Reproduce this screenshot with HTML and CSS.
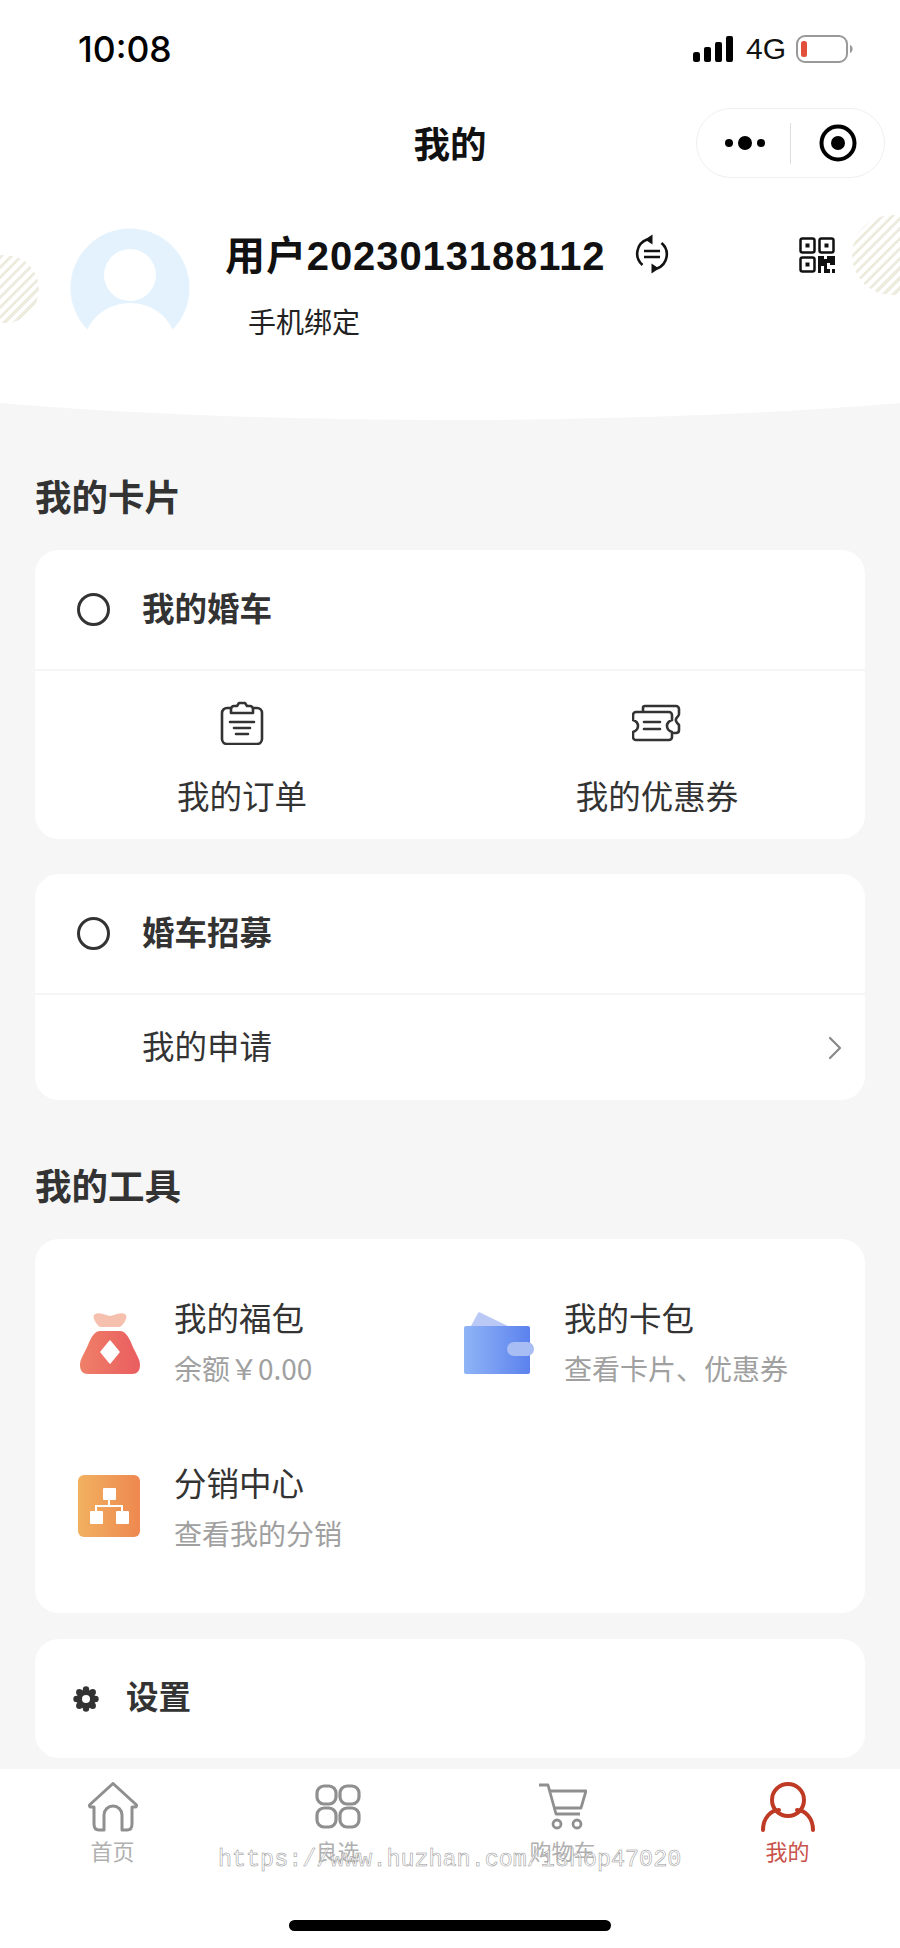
FILE: index.html
```html
<!DOCTYPE html>
<html lang="zh-CN">
<head>
<meta charset="utf-8">
<title>我的</title>
<link rel="stylesheet" href="styles.css">
</head>
<body>
<div class="phone">
  <header class="header">
    <span class="stripe stripe-left"></span>
    <span class="stripe stripe-right"></span>
    <div class="status">
      <span class="time">10:08</span>
      <div class="status-right">
        <svg class="signal" width="40" height="26" viewBox="0 0 40 26"><rect x="0" y="16" width="7" height="10" rx="2.5"/><rect x="11" y="11" width="7" height="15" rx="2"/><rect x="22" y="6" width="7" height="20" rx="2"/><rect x="33" y="0" width="7" height="26" rx="2"/></svg>
        <span class="net">4G</span>
        <svg class="battery" width="57" height="28" viewBox="0 0 57 28"><rect x="1" y="1" width="50" height="26" rx="8" fill="#fff" stroke="#999" stroke-width="2"/><rect x="5" y="6" width="6" height="16" rx="2.5" fill="#e2503c"/><path d="M54 10c2 1 2.600 2.500 2.600 4s-.6 3-2.600 4z" fill="#999"/></svg>
      </div>
    </div>
    <nav class="nav">
      <h1 class="nav-title">我的</h1>
      <div class="capsule">
        <svg width="48" height="16" viewBox="0 0 48 16"><circle cx="8" cy="8" r="4"/><circle cx="24" cy="8" r="7"/><circle cx="40" cy="8" r="4"/></svg>
        <span class="capsule-line"></span>
        <svg width="38" height="38" viewBox="0 0 38 38"><circle cx="19" cy="19" r="16.500" fill="none" stroke="#000" stroke-width="4"/><circle cx="19" cy="19" r="7"/></svg>
      </div>
    </nav>
    <div class="profile">
      <svg class="avatar" width="120" height="120" viewBox="0 0 120 120">
        <circle cx="60" cy="60" r="59.500" fill="#e3f2fd"/>
        <rect x="0" y="102" width="120" height="18" fill="#fff"/>
        <ellipse cx="60" cy="118" rx="46" ry="43" fill="#fff"/>
        <circle cx="60" cy="47" r="26" fill="#fff"/>
      </svg>
      <div class="profile-text">
        <div class="name-row">
          <span class="name">用户2023013188112</span>
          <svg class="swap" width="38" height="40" viewBox="0 0 38 40" fill="none" stroke="#111" stroke-width="2.600"><path d="M14 5.500A15 15 0 0 0 9.500 31"/><path d="M24 34.500A15 15 0 0 0 28.500 9"/><path d="M19.500 .5v10L12 5.500z" fill="#111" stroke="none"/><path d="M18.500 39.500v-10l7.500 5z" fill="#111" stroke="none"/><path d="M11 17h16M11 23h16"/></svg>
          <svg class="qr" width="36" height="36" viewBox="0 0 36 36" fill="none" stroke="#111" stroke-width="2.500"><rect x="1.500" y="1.500" width="14" height="14" rx="2"/><rect x="20.500" y="1.500" width="14" height="14" rx="2"/><rect x="1.500" y="20.500" width="14" height="14" rx="2"/><g fill="#111" stroke="none"><rect x="6.500" y="6.500" width="4" height="4"/><rect x="25.500" y="6.500" width="4" height="4"/><rect x="6.500" y="25.500" width="4" height="4"/><path d="M19 19h6v3h3v-3h8v9h-5v-2h-3v10h-3v-7h-3v7h-3z"/><rect x="28" y="32" width="3" height="4"/><rect x="33" y="32" width="3" height="4"/></g></svg>
        </div>
        <div class="bind">手机绑定</div>
      </div>
    </div>
  </header>

  <main class="content">
    <h2 class="section-title">我的卡片</h2>
    <section class="card">
      <div class="card-head"><span class="ring"></span><span class="card-title">我的婚车</span></div>
      <div class="shortcuts">
        <div class="shortcut">
          <svg width="44" height="44" viewBox="0 0 44 44" fill="none" stroke="#333" stroke-width="2.600" stroke-linecap="round" stroke-linejoin="round"><path d="M11 7H7a5 5 0 0 0-5 5v26a5 5 0 0 0 5 5h30a5 5 0 0 0 5-5V12a5 5 0 0 0-5-5h-4"/><path d="M11 12V8a3 3 0 0 1 3-3h3l2-3h6l2 3h3a3 3 0 0 1 3 3v4z"/><path d="M10 21h24M14 27h16M16 33h12"/></svg>
          <span class="shortcut-label">我的订单</span>
        </div>
        <div class="shortcut">
          <svg width="50" height="36" viewBox="0 0 50 36" fill="none" stroke="#333" stroke-width="2.600" stroke-linecap="round" stroke-linejoin="round"><path d="M11 6V3a2 2 0 0 1 2-2h31a3 3 0 0 1 3 3v5c0 2-2 3-3 5s1 4 3 6v5c0 2-1 3-3 3h-2"/><path d="M4 7h33a3 3 0 0 1 3 3v5c-3 1-5 3-5 6s2 5 5 6v5a3 3 0 0 1-3 3H4a3 3 0 0 1-3-3v-5c3-1 5-3 5-6s-2-5-5-6v-5a3 3 0 0 1 3-3z"/><path d="M12 17h16M12 24h16"/></svg>
          <span class="shortcut-label">我的优惠券</span>
        </div>
      </div>
    </section>

    <section class="card card-recruit">
      <div class="card-head"><span class="ring"></span><span class="card-title">婚车招募</span></div>
      <div class="row">
        <span class="row-label">我的申请</span>
        <svg class="chevron" width="14" height="24" viewBox="0 0 14 24" fill="none" stroke="#888" stroke-width="2.200" stroke-linecap="round" stroke-linejoin="round"><path d="M2 2l10 10L2 22"/></svg>
      </div>
    </section>

    <h2 class="section-title section-tools">我的工具</h2>
    <section class="card tools">
      <div class="tool">
        <div class="tool-icon">
          <svg width="60" height="62" viewBox="0 0 60 62"><defs><linearGradient id="bag"><stop offset="0" stop-color="#ef8068"/><stop offset="1" stop-color="#ea5d60"/></linearGradient></defs><path d="M14 3c4-4 10 0 16 1 6-1 12-5 16-1 2 3-3 10-6 12H20c-3-2-8-9-6-12z" fill="#f6c0ae"/><path d="M20 19h20c5 0 9 6 12 14 4 9 8 14 8 20 0 6-3 9-8 9H8c-5 0-8-3-8-9 0-6 4-11 8-20 3-8 7-14 12-14z" fill="url(#bag)"/><path d="M30 29l9 11-9 11-9-11z" fill="#fff" stroke="#fff" stroke-width="1.500" stroke-linejoin="round"/></svg>
        </div>
        <div><div class="tool-title">我的福包</div><div class="tool-sub">余额￥0.00</div></div>
      </div>
      <div class="tool">
        <div class="tool-icon">
          <svg class="wallet" width="70" height="62" viewBox="0 0 70 62"><defs><linearGradient id="wal"><stop offset="0" stop-color="#8fb4f6"/><stop offset="1" stop-color="#5c82ee"/></linearGradient></defs><path d="M7 14L14 1c1-1 2-1 3 0l29 14z" fill="#b9c8f5"/><rect x="0" y="14" width="66" height="48" rx="2" fill="url(#wal)"/><rect x="43" y="30" width="27" height="14" rx="7" fill="#a9bdf5"/></svg>
        </div>
        <div><div class="tool-title">我的卡包</div><div class="tool-sub">查看卡片、优惠券</div></div>
      </div>
      <div class="tool">
        <div class="tool-icon tool-icon-org">
          <svg width="62" height="62" viewBox="0 0 62 62"><defs><linearGradient id="org"><stop offset="0" stop-color="#f1b160"/><stop offset="1" stop-color="#ee8850"/></linearGradient></defs><rect width="62" height="62" rx="6" fill="url(#org)"/><g fill="#fff"><rect x="25" y="13" width="13" height="12" rx="1"/><rect x="12" y="36" width="13" height="13" rx="1"/><rect x="38" y="36" width="13" height="13" rx="1"/></g><path d="M31 25v6M18 36v-5h26v5" fill="none" stroke="#fff" stroke-width="2"/></svg>
        </div>
        <div><div class="tool-title">分销中心</div><div class="tool-sub">查看我的分销</div></div>
      </div>
    </section>

    <section class="card settings">
      <svg width="26" height="26" viewBox="0 0 26 26" fill="#333"><g><circle cx="13" cy="13" r="9.500"/><circle cx="13" cy="3.500" r="3.200"/><circle cx="13" cy="22.500" r="3.200"/><circle cx="3.500" cy="13" r="3.200"/><circle cx="22.500" cy="13" r="3.200"/><circle cx="6.300" cy="6.300" r="3.200"/><circle cx="19.700" cy="6.300" r="3.200"/><circle cx="6.300" cy="19.700" r="3.200"/><circle cx="19.700" cy="19.700" r="3.200"/></g><circle cx="13" cy="13" r="4" fill="#fff"/></svg>
      <span class="settings-label">设置</span>
    </section>
  </main>

  <footer class="tabbar">
    <div class="tabs">
      <div class="tab">
        <svg width="50" height="50" viewBox="0 0 50 50" fill="none" stroke="#8f8f8f" stroke-width="3" stroke-linejoin="round" stroke-linecap="round"><path d="M6 25L3 25C1.500 25 1 23.500 2 22.500L25 1.500 48 22.500C49 23.500 48.500 25 47 25H44V42C44 46 42 48 39 48H34V33A9 9 0 0 0 16 33V48H11C8 48 6 46 6 42z"/></svg>
        <span class="tab-label">首页</span>
      </div>
      <div class="tab">
        <svg width="46" height="48" viewBox="0 0 46 48" fill="none" stroke="#8f8f8f" stroke-width="3.200"><rect x="2" y="3" width="19" height="18" rx="7"/><rect x="25" y="3" width="19" height="18" rx="7"/><rect x="2" y="25" width="19" height="19" rx="7"/><rect x="25" y="25" width="19" height="19" rx="7"/></svg>
        <span class="tab-label">良选</span>
      </div>
      <div class="tab">
        <svg width="48" height="48" viewBox="0 0 48 48" fill="none" stroke="#8f8f8f" stroke-width="2.800" stroke-linejoin="round"><path d="M0 2h9l8 29h24"/><path d="M10 8h37l-5 17H15"/><circle cx="18" cy="41" r="4"/><circle cx="38" cy="41" r="4"/></svg>
        <span class="tab-label">购物车</span>
      </div>
      <div class="tab tab-active">
        <svg width="54" height="50" viewBox="0 0 54 50" fill="none" stroke="#bf3a24" stroke-width="4" stroke-linecap="round"><ellipse cx="27" cy="18" rx="16" ry="16"/><path d="M2 48c0-12 8-20 16-20M52 48c0-12-8-20-16-20"/></svg>
        <span class="tab-label">我的</span>
      </div>
    </div>
    <div class="watermark">https://www.huzhan.com/1shop47020</div>
    <div class="home-bar"></div>
  </footer>
</div>
</body>
</html>
```
FILE: styles.css
```css
* { box-sizing: border-box; }
html, body { margin: 0; padding: 0; }
body {
  background: #f6f6f6;
  font-family: "Noto Sans CJK SC", "Liberation Sans", sans-serif;
  color: #333;
}
.phone {
  position: relative;
  width: 900px;
  height: 1948px;
  overflow: hidden;
  display: flex;
  flex-direction: column;
}

/* header */
.header {
  position: relative;
  isolation: isolate;
  height: 420px;
  flex: none;
  overflow: hidden;
  background: linear-gradient(#fff 0 403px, transparent 403px);
}
.header::before {
  content: "";
  position: absolute;
  z-index: -1;
  left: -350px;
  bottom: 0;
  width: 1600px;
  height: 196px;
  border-radius: 50%;
  background: #fff;
}
.stripe {
  position: absolute;
  border-radius: 50%;
  background: repeating-linear-gradient(135deg, #eeebdf 0 3px, #fff 3px 7px);
}
.stripe-left { left: -29px; top: 255px; width: 68px; height: 68px; }
.stripe-right { left: 852px; top: 215px; width: 80px; height: 80px; }

.status {
  height: 98px;
  display: flex;
  justify-content: space-between;
  align-items: center;
  padding: 0 47px 0 78px;
  color: #000;
}
.time {
  font-family: "Inter", "Liberation Sans", sans-serif;
  font-weight: 500;
  font-size: 35.500px;
  letter-spacing: 0;
}
.status-right { display: flex; align-items: center; }
.signal { fill: #000; }
.net {
  font-family: "Liberation Sans", sans-serif;
  font-size: 30px;
  margin: 0 10px 0 13px;
  color: #111;
}
.nav {
  height: 90px;
  display: grid;
  grid-template-columns: 1fr auto 1fr;
  align-items: center;
}
.nav-title {
  grid-column: 2;
  margin: 0;
  font-size: 36.500px;
  font-weight: 700;
  color: #111;
  line-height: 1.2;
}
.capsule {
  grid-column: 3;
  justify-self: end;
  margin-right: 15px;
  width: 189px;
  height: 70px;
  border: 1px solid #efefef;
  border-radius: 35px;
  background: #fff;
  display: flex;
  align-items: center;
  padding-left: 24px;
}
.capsule-line { width: 1px; height: 41px; background: #ddd; margin: 0 28px 0 21px; }

.profile {
  position: relative;
  display: flex;
  padding: 40px 0 0 70px;
}
.avatar { flex: none; }
.profile-text { margin-left: 35px; flex: 1; }
.name-row {
  position: relative;
  display: flex;
  align-items: center;
  height: 54px;
}
.name {
  font-family: "Liberation Sans", "Noto Sans CJK SC", sans-serif;
  font-weight: 700;
  font-size: 40px;
  color: #111;
  letter-spacing: .9px;
  white-space: nowrap;
  margin-bottom: 5px;
}
.swap { margin: 0 0 2px 27px; flex: none; }
.qr { margin-left: 128px; flex: none; }
.bind {
  margin: 19px 0 0 23px;
  font-size: 28px;
  line-height: 40px;
  color: #222;
}

/* content */
.content { flex: 1; padding: 0 35px; min-height: 0; }
.section-title {
  margin: 0;
  padding-top: 54px;
  height: 130px;
  font-size: 36.500px;
  line-height: 44px;
  font-weight: 700;
  color: #333;
}
.section-tools { height: 139px; padding-top: 63px; }
.card {
  background: #fff;
  border-radius: 24px;
  width: 830px;
}
.card-head {
  height: 121px;
  padding-left: 42px;
  display: flex;
  align-items: center;
  border-bottom: 2px solid #f5f5f5;
}
.ring {
  width: 33px;
  height: 33px;
  border: 3px solid #333;
  border-radius: 50%;
  margin: 0 32px 0 0;
  flex: none;
}
.card-title {
  font-size: 32.500px;
  font-weight: 700;
  color: #333;
  margin-bottom: 6px;
}
.shortcuts {
  height: 168px;
  display: grid;
  grid-template-columns: 414px 1fr;
}
.shortcut {
  display: flex;
  flex-direction: column;
  align-items: center;
}
.shortcut svg { height: 44px; margin-top: 30px; }
.shortcut-label { font-size: 32.500px; line-height: 44px; margin-top: 28px; color: #333; }
.card-recruit { margin-top: 35px; height: 226px; }
.row {
  height: 103px;
  padding: 0 23px 0 107px;
  display: flex;
  align-items: center;
  justify-content: space-between;
  font-size: 32.500px;
  color: #333;
}
.row-label { margin-bottom: 5px; }
.chevron { margin-top: 2px; }
.tools {
  height: 374px;
  padding: 60px 0 0 45px;
  display: grid;
  grid-template-columns: 390px 1fr;
  grid-auto-rows: 90px;
  row-gap: 75px;
}
.tool { display: flex; }
.tool-icon { width: 94px; flex: none; padding-top: 13px; }
.tool-icon-org { padding-top: 11px; }
.tool-icon-org svg { margin-left: -2px; }
.wallet { margin-left: -6px; }
.tool-title { font-size: 32.500px; line-height: 40px; margin-top: -2px; color: #333; }
.tool-sub { font-size: 28px; line-height: 40px; margin-top: 11px; color: #a0a0a0; white-space: nowrap; }
.settings {
  margin-top: 26px;
  height: 119px;
  padding-left: 38px;
  display: flex;
  align-items: center;
}
.settings-label { font-size: 32.500px; font-weight: 700; margin: 0 0 8px 27px; color: #333; }

/* tab bar */
.tabbar {
  position: relative;
  height: 179px;
  flex: none;
  background: #fff;
}
.tabs { display: grid; grid-template-columns: repeat(4, 225px); padding-top: 13px; }
.tab { display: flex; flex-direction: column; align-items: center; height: 90px; }
.tab svg { height: 50px; flex: none; }
.tab-label { font-size: 22px; line-height: 32px; margin-top: 2px; color: #b0b0b0; }
.tab-active .tab-label { color: #c9524a; }
.watermark {
  position: absolute;
  left: 218px;
  top: 76px;
  font-family: "Liberation Mono", monospace;
  font-size: 23.400px;
  line-height: 30px;
  white-space: nowrap;
  color: rgba(255, 255, 255, .5);
  -webkit-text-stroke: .5px #909090;
}
.home-bar {
  position: absolute;
  left: 289px;
  top: 151px;
  width: 322px;
  height: 11px;
  border-radius: 6px;
  background: #000;
}
```
